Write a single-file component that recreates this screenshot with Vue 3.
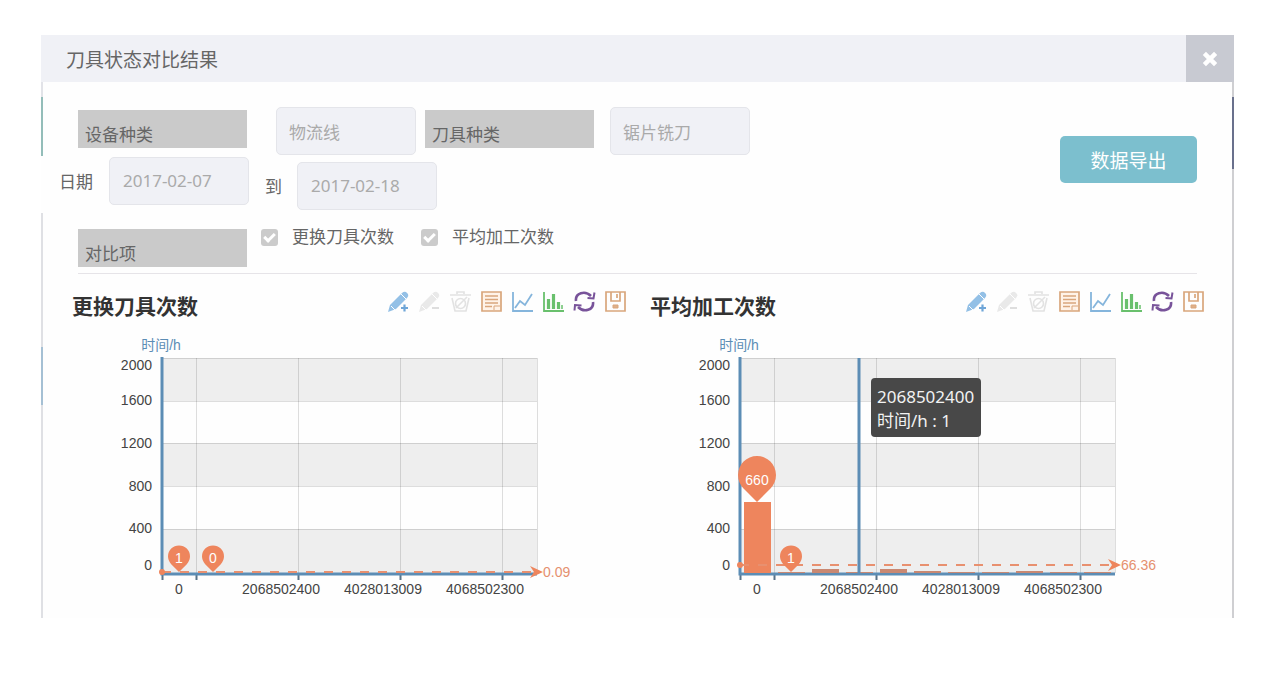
<script setup>
import { ref } from 'vue'

const device = ref('物流线')
const cutter = ref('锯片铣刀')
const from = ref('2017-02-07')
const to = ref('2017-02-18')
const showChanges = ref(true)
const showAverage = ref(true)

const LEFT = 106
const TOP = 28
const STEP = 34
const WIDTH = 375
const BASE = 243

const yTicks = [
  { text: '2000', line: 28, label: 40 },
  { text: '1600', line: 71, label: 75 },
  { text: '1200', line: 113, label: 118 },
  { text: '800', line: 156, label: 161 },
  { text: '400', line: 199, label: 203 },
  { text: '0', line: 243, label: 240 },
]
const bands = [
  { y: 28, h: 43 },
  { y: 113, h: 43 },
  { y: 199, h: 44 },
]
const xTicks = [106, 140, 242, 344, 446]
const xLabels = [
  { text: '0', x: 123 },
  { text: '2068502400', x: 225 },
  { text: '4028013009', x: 327 },
  { text: '4068502300', x: 429 },
]

const charts = [
  {
    title: '更换刀具次数',
    bars: [],
    average: { y: 242, text: '0.09' },
    pins: [
      { x: 123, tip: 242, r: 11, text: '1' },
      { x: 157, tip: 242, r: 11, text: '0' },
    ],
    tip: null,
  },
  {
    title: '平均加工次数',
    bars: [71, 1, 4, 1, 4, 2, 1, 1, 2, 1, 1],
    average: { y: 235, text: '66.36' },
    pins: [
      { x: 123, tip: 172, r: 19, text: '660' },
      { x: 157, tip: 242, r: 11, text: '1' },
    ],
    tip: { line: 225, x: 237, y: 48, rows: ['2068502400', '时间/h : 1'] },
  },
]

const tools = ['添加辅助线', '删除辅助线', '清空辅助线', '数据视图', '折线图', '柱形图', '还原', '保存为图片']

function pinPath({ x, tip, r }) {
  const d = r * 1.42
  const cy = tip - d
  const dy = (r * r) / d
  const dx = Math.sqrt(r * r - dy * dy)
  return `M${x} ${tip}L${x - dx} ${cy + dy}A${r} ${r} 0 1 1 ${x + dx} ${cy + dy}Z`
}
</script>

<template>
  <main class="page">
    <section class="dialog" role="dialog" aria-labelledby="dialog-title">
      <header class="head">
        <h1 id="dialog-title">刀具状态对比结果</h1>
        <button class="close" type="button" aria-label="关闭">
          <svg width="18" height="18" viewBox="0 0 16 16">
            <path d="M3 3L13 13M13 3L3 13" stroke="#fff" stroke-width="4" />
          </svg>
        </button>
      </header>

      <div class="body">
        <form class="filters" @submit.prevent>
          <div class="fields">
            <div class="row first">
              <label class="tag" for="device">设备种类</label>
              <input id="device" v-model="device" class="box device" type="text" readonly />
              <label class="tag" for="cutter">刀具种类</label>
              <input id="cutter" v-model="cutter" class="box cutter" type="text" readonly />
            </div>
            <div class="row dates">
              <label for="from">日期</label>
              <input id="from" v-model="from" class="box" type="text" readonly />
              <div class="until">
                <label for="to">到</label>
                <input id="to" v-model="to" class="box" type="text" readonly />
              </div>
            </div>
            <div class="row compare">
              <span class="tag">对比项</span>
              <label class="check"><input v-model="showChanges" type="checkbox" />更换刀具次数</label>
              <label class="check"><input v-model="showAverage" type="checkbox" />平均加工次数</label>
            </div>
          </div>
          <button class="export" type="button">数据导出</button>
        </form>

        <div class="charts">
          <article v-for="c in charts" :key="c.title" class="chart">
            <div class="bar">
              <h2>{{ c.title }}</h2>
              <div class="tools">
                <button v-for="(t, i) in tools" :key="t" type="button" :aria-label="t">
                  <svg width="23" height="23" viewBox="0 0 23 23" fill="none">
                    <g v-if="i === 0" fill="#93c0e6">
                      <path d="M1 22L3 15L15 3Q17 1 19 2L21 4Q22 6 20 8L9 19Z" />
                      <path d="M4 16L8 20M14 4L19 9" stroke="#fff" stroke-width="1" />
                      <path d="M14 18H21M17.500 14.500V21.500" stroke="#6fa6d8" stroke-width="2.200" />
                    </g>
                    <g v-else-if="i === 1" fill="#e9e9e9">
                      <path d="M1 22L3 15L15 3Q17 1 19 2L21 4Q22 6 20 8L9 19Z" />
                      <path d="M4 16L8 20M14 4L19 9" stroke="#fff" stroke-width="1" />
                      <path d="M14 18H21" stroke="#dedede" stroke-width="2" />
                    </g>
                    <g v-else-if="i === 2" stroke="#e2e2e2" stroke-width="1.600">
                      <path d="M1 5H22M8 4V2H15V4M3 8L6 21H17L20 8" />
                      <circle cx="11.500" cy="13.500" r="5" />
                      <path d="M7 18L18 7" />
                    </g>
                    <g v-else-if="i === 3" stroke="#d9a67c" stroke-width="1.700">
                      <path d="M2 2H21V21H2Z" fill="#fff3e8" />
                      <path d="M5 6H18M5 9.500H18M5 13H18M5 16.500H12" />
                      <path d="M14 20V16H20" stroke-width="1" />
                    </g>
                    <g v-else-if="i === 4" stroke="#85b5dc" stroke-width="1.800">
                      <path d="M2 2V21H22" />
                      <path d="M4 18L9 11L14 15L21 4" />
                    </g>
                    <g v-else-if="i === 5" stroke="#69c06d" stroke-width="1.800">
                      <path d="M2 2V21H22" />
                      <path d="M6.500 9V19M11.500 4V19M16.500 12V19" stroke-width="3.200" />
                      <path d="M20 15V19" stroke-width="1.500" />
                    </g>
                    <g v-else-if="i === 6" stroke="#78539a" stroke-width="2.600">
                      <path d="M3 11C2 3 12 0 18 6M20 12C21 20 11 23 5 17" />
                      <path d="M21.500 2.500L20.500 8.500L14.500 8M1.500 20.500L2 15L8.500 15.500" stroke-width="2" />
                    </g>
                    <g v-else stroke="#d9a67c" stroke-width="1.700">
                      <path d="M2 2H21V21H2Z" />
                      <path d="M7 2V11H16V2M13 4V8" />
                      <path d="M9 15H14V18H9Z" fill="#dfb08a" stroke-width="1" />
                    </g>
                  </svg>
                </button>
              </div>
            </div>

            <svg class="plot" viewBox="0 0 578 288" role="img" :aria-label="c.title">
              <rect v-for="b in bands" :key="b.y" :x="LEFT" :y="b.y" :width="WIDTH" :height="b.h" fill="#eee" />
              <g stroke="#000" stroke-opacity="0.13">
                <line v-for="t in yTicks" :key="t.text" :x1="LEFT" :x2="LEFT + WIDTH" :y1="t.line + 0.5" :y2="t.line + 0.5" />
                <line v-for="x in xTicks" :key="x" :x1="x + 0.5" :x2="x + 0.5" :y1="TOP" :y2="BASE" />
                <line :x1="LEFT + WIDTH + 0.5" :x2="LEFT + WIDTH + 0.5" :y1="TOP" :y2="BASE" />
              </g>
              <text class="unit" x="105" y="20">时间/h</text>
              <text v-for="t in yTicks" :key="t.text" class="axis end" x="96" :y="t.label">{{ t.text }}</text>
              <line v-for="x in xTicks" :key="x" :x1="x + 0.5" :x2="x + 0.5" y1="244" y2="250" stroke="#587389" stroke-width="2" />
              <text v-for="l in xLabels" :key="l.text" class="axis" :x="l.x" y="264">{{ l.text }}</text>

              <path :d="`M${LEFT} ${TOP - 1}V${BASE + 1}H${LEFT + WIDTH}`" fill="none" stroke="#5c8db5" stroke-width="3" />
              <rect
                v-for="(h, i) in c.bars" :key="i" :x="LEFT + 4 + i * STEP" :y="BASE - h"
                width="27" :height="h" :fill="i ? '#c98872' : '#ee855d'"
              />
              <line v-if="c.tip" :x1="c.tip.line" :x2="c.tip.line" :y1="TOP" :y2="BASE" stroke="#5c8db5" stroke-width="3" />

              <g fill="#ee855d">
                <line :x1="LEFT" x2="476" :y1="c.average.y" :y2="c.average.y" stroke="#e8906f" stroke-width="2" stroke-dasharray="9 9" />
                <circle :cx="LEFT" :cy="c.average.y" r="3" />
                <path :d="`M487 ${c.average.y}l-13 -6l4 6l-4 6Z`" />
                <path v-for="p in c.pins" :key="p.x" :d="pinPath(p)" />
              </g>
              <text class="avg" x="487" :y="c.average.y + 5">{{ c.average.text }}</text>
              <text v-for="p in c.pins" :key="p.x" class="pin" :x="p.x" :y="p.tip - (p.r > 11 ? 17 : 9)">{{ p.text }}</text>

              <g v-if="c.tip">
                <rect :x="c.tip.x" :y="c.tip.y" width="110" height="59" rx="4" fill="#484848" />
                <text v-for="(r, i) in c.tip.rows" :key="r" class="tip" :x="c.tip.x + 6" :y="c.tip.y + 25 + i * 24">{{ r }}</text>
              </g>
            </svg>
          </article>
        </div>
      </div>
    </section>
  </main>
</template>

<style>
body {
  margin: 0;
  background: #fff;
}
</style>

<style scoped>
.page {
  padding: 35px 38px 0 41px;
  font-family: "Noto Sans", "Noto Sans CJK SC", sans-serif;
  font-size: 17px;
  line-height: 24px;
  color: #666;
}
.dialog {
  background: #fefefe;
}
.head {
  display: flex;
  justify-content: space-between;
  height: 47px;
  background: #f0f1f6;
}
h1 {
  margin: 0;
  padding-left: 25px;
  font-size: 19px;
  font-weight: 400;
  line-height: 50px;
  color: #666;
}
button {
  border: 0;
  padding: 0;
  font-family: inherit;
  cursor: pointer;
}
.close {
  display: flex;
  align-items: center;
  justify-content: center;
  width: 48px;
  background: #c8cad2;
}
.body {
  position: relative;
  padding: 25px 22px 0 15px;
}
.body::before,
.body::after {
  content: "";
  position: absolute;
  top: 0;
  bottom: 0;
  width: 2px;
}
.body::before {
  left: 0;
  background: linear-gradient(#e2e3e8 15px, #93bdb9 15px 74px, #fefefe 74px 131px, #dfe0e4 131px 265px, #a5c0d4 265px 323px, #dfe0e4 323px);
}
.body::after {
  right: 0;
  background: linear-gradient(#cfcfd2 15px, #69708c 15px 87px, #cfcfd2 87px);
}
.filters {
  display: flex;
  justify-content: space-between;
  align-items: flex-start;
  margin: 0 15px 0 22px;
  padding-bottom: 6px;
  border-bottom: 1px solid #e6e4e8;
}
.row {
  display: flex;
  align-items: flex-start;
}
.tag {
  box-sizing: border-box;
  width: 169px;
  height: 38px;
  padding: 13px 7px 0;
  background: #cacaca;
  color: #666;
}
.first .tag {
  margin-top: 3px;
}
.box {
  box-sizing: border-box;
  width: 140px;
  height: 48px;
  padding: 0 13px;
  border: 1px solid #e4e5ea;
  border-radius: 5px;
  background: #f0f1f6;
  font: inherit;
  color: #aaa;
  outline: 0;
}
.first .box {
  padding: 0 12px;
}
.device {
  margin: 0 9px 0 29px;
}
.cutter {
  margin-left: 16px;
}
.dates {
  gap: 16px;
  margin: 2px 0 0 -19px;
  line-height: 50px;
}
.until {
  display: flex;
  gap: 15px;
  padding-top: 5px;
}
.compare {
  margin-top: 17px;
}
.check {
  display: flex;
  align-items: center;
  gap: 14px;
  height: 16px;
  margin-left: 14px;
}
.check + .check {
  margin-left: 27px;
}
.check input {
  appearance: none;
  display: flex;
  justify-content: center;
  width: 17px;
  height: 17px;
  margin: 0;
  border-radius: 3px;
  background: #cbcbcb;
}
.check input:checked::after {
  content: "";
  width: 4px;
  height: 8px;
  margin-top: 2px;
  border: solid #fff;
  border-width: 0 3px 3px 0;
  transform: rotate(45deg);
}
.export {
  width: 137px;
  height: 47px;
  margin-top: 29px;
  border-radius: 5px;
  background: #7cbfce;
  color: #fff;
  font-size: 19px;
}
.charts {
  display: grid;
  grid-template-columns: 1fr 1fr;
  padding-top: 16px;
}
.bar {
  display: flex;
  justify-content: space-between;
  align-items: flex-start;
  height: 40px;
  padding: 0 7px 0 16px;
}
h2 {
  margin: 0;
  padding-top: 4px;
  font-size: 21px;
  font-weight: 700;
  color: #333;
}
.tools {
  display: flex;
  gap: 8px;
}
.tools button {
  display: flex;
  background: none;
}
.plot {
  display: block;
  width: 100%;
}
.axis,
.unit,
.avg,
.pin {
  font-family: "Liberation Sans", "Noto Sans CJK SC", sans-serif;
  font-size: 14px;
  text-anchor: middle;
  fill: #444;
}
.end {
  text-anchor: end;
}
.unit {
  fill: #5c8db5;
}
.avg {
  text-anchor: start;
  fill: #e5906f;
}
.pin {
  fill: #fff;
}
.tip {
  font-size: 17px;
  fill: #f2f2f2;
}
</style>
